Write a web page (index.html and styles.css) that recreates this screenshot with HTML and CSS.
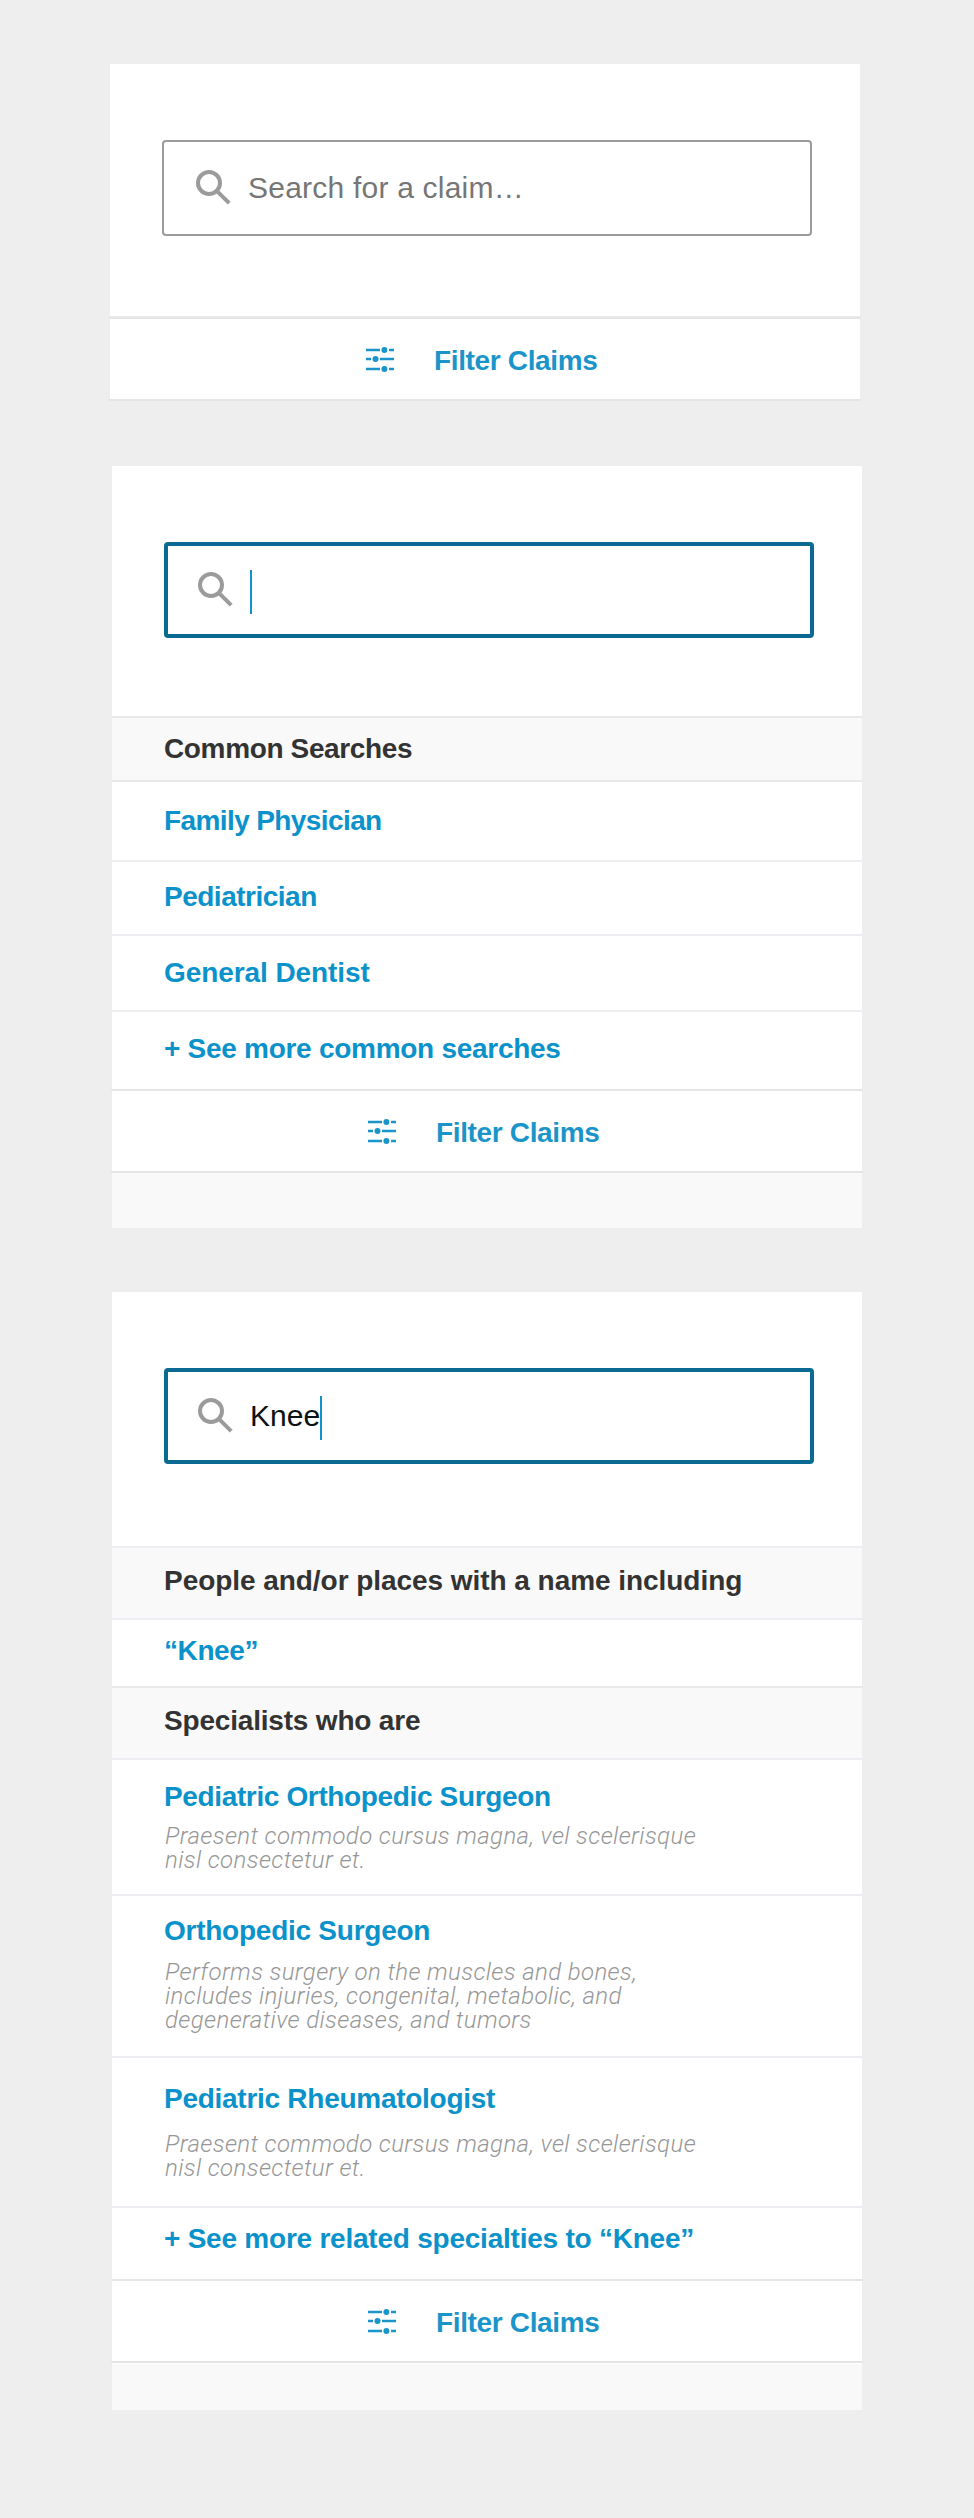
FILE: index.html
```
<!DOCTYPE html>
<html lang="en">
<head>
<meta charset="utf-8">
<title>Claim search</title>
<link rel="stylesheet" href="styles.css">
</head>
<body>
<svg class="defs" width="0" height="0">
  <symbol id="search" viewBox="0 0 36 36">
    <circle cx="13" cy="13" r="11" fill="none" stroke="#9b9b9b" stroke-width="4"/>
    <path d="M21.8 21.8 33.2 33.2" stroke="#9b9b9b" stroke-width="4"/>
  </symbol>
  <symbol id="sliders" viewBox="0 0 28 26">
    <path d="M0 3h14M23 3h5M0 12h5M14 12h14M0 22h14M23 22h5" stroke="#1b95c9" stroke-width="2.4"/>
    <g fill="#1b95c9"><circle cx="18.4" cy="3" r="3"/><circle cx="9.5" cy="12" r="3"/><circle cx="18.4" cy="22" r="3"/></g>
  </symbol>
</svg>
<main class="page">
  <section class="card card-idle">
    <div class="search">
      <div class="field"><svg class="glass"><use href="#search"/></svg><span class="placeholder">Search for a claim…</span></div>
    </div>
    <div class="line line-thick"></div>
    <div class="filter"><svg class="sliders"><use href="#sliders"/></svg><span>Filter Claims</span></div>
    <div class="line line-dark"></div>
  </section>

  <section class="card card-focus">
    <div class="search">
      <div class="field field-active"><svg class="glass"><use href="#search"/></svg><i class="caret"></i></div>
    </div>
    <div class="line line-head"></div>
    <h2 class="heading heading-common">Common Searches</h2>
    <div class="line line-head"></div>
    <a class="row row-family">Family Physician</a>
    <div class="line"></div>
    <a class="row row-pediatrician">Pediatrician</a>
    <div class="line"></div>
    <a class="row row-dentist">General Dentist</a>
    <div class="line"></div>
    <a class="row row-more">+ See more common searches</a>
    <div class="line line-dark"></div>
    <div class="filter"><svg class="sliders"><use href="#sliders"/></svg><span>Filter Claims</span></div>
    <div class="line line-dark"></div>
    <div class="foot"></div>
  </section>

  <section class="card card-results">
    <div class="search">
      <div class="field field-active"><svg class="glass"><use href="#search"/></svg><span class="value">Knee</span><i class="caret"></i></div>
    </div>
    <div class="line"></div>
    <h2 class="heading heading-people">People and/or places with a name including</h2>
    <div class="line"></div>
    <a class="row row-knee">“Knee”</a>
    <div class="line line-head"></div>
    <h2 class="heading heading-who">Specialists who are</h2>
    <div class="line"></div>
    <article class="row result-pos">
      <a class="title">Pediatric Orthopedic Surgeon</a>
      <p class="desc">Praesent commodo cursus magna, vel scelerisque<br>nisl consectetur et.</p>
    </article>
    <div class="line"></div>
    <article class="row result-os">
      <a class="title">Orthopedic Surgeon</a>
      <p class="desc">Performs surgery on the muscles and bones,<br>includes injuries, congenital, metabolic, and<br>degenerative diseases, and tumors</p>
    </article>
    <div class="line"></div>
    <article class="row result-pr">
      <a class="title">Pediatric Rheumatologist</a>
      <p class="desc">Praesent commodo cursus magna, vel scelerisque<br>nisl consectetur et.</p>
    </article>
    <div class="line"></div>
    <a class="row row-related">+ See more related specialties to “Knee”</a>
    <div class="line line-dark"></div>
    <div class="filter"><svg class="sliders"><use href="#sliders"/></svg><span>Filter Claims</span></div>
    <div class="line line-dark"></div>
    <div class="foot"></div>
  </section>
</main>
</body>
</html>
```
FILE: styles.css
```
* { box-sizing: border-box; }
body { margin: 0; background: #eee; font-family: "Liberation Sans", Arial, sans-serif; }
.defs { display: block; position: absolute; }
.page { display: flex; flex-direction: column; min-height: 2518px; padding: 64px 0 0 112px; }

.card { width: 750px; background: #fff; }
.card-idle { margin: 0 0 65px -2px; }
.card-focus { margin-bottom: 64px; }

.search { padding: 76px 48px 0 52px; height: 250px; }
.card-idle .search { height: 252px; }
.card-results .search { height: 254px; }

.field { --edge: 2px; display: flex; align-items: flex-start; width: 650px; height: 96px;
  padding: calc(30px - var(--edge)) 0 0 calc(34px - var(--edge));
  border: var(--edge) solid #9b9b9b; border-radius: 4px;
  font-size: 30px; line-height: 35px; white-space: nowrap; }
.field-active { --edge: 4px; border-color: #0a6a91; }
.glass { flex: none; width: 36px; height: 36px; margin-right: 16px; }
.placeholder { color: #767676; letter-spacing: .22px; }
.value { width: 70px; color: #0b1214; }
.caret { flex: none; width: 2px; height: 44px; margin-top: -2px; background: #1492c9; }

.line { height: 2px; margin: 0 -1px; background: #eeeef2; }
.line-head { background: #e9e9ec; }
.line-dark { background: #e5e5e5; }
.line-thick { height: 3px; background: #e5e5e5; border-top: 1px solid #ebebeb; }

.heading, .row, .filter { font-size: 28px; line-height: 33px; font-weight: 700; letter-spacing: -.25px; white-space: nowrap; }
.heading { margin: 0; padding: 16px 0 0 52px; height: 70px; background: #f9f9f9; color: #333; }
.row { display: block; padding-left: 52px; color: #0c92ca; }

.heading-common { height: 62px; padding-top: 14px; letter-spacing: -.36px; }
.heading-people { letter-spacing: -.05px; }
.heading-who { letter-spacing: -.19px; }
.row-family { height: 78px; padding-top: 22px; letter-spacing: -.6px; }
.row-pediatrician { height: 72px; padding-top: 18px; letter-spacing: -.5px; }
.row-dentist { height: 74px; padding-top: 20px; letter-spacing: -.08px; }
.row-more { height: 77px; padding-top: 20px; letter-spacing: -.28px; }
.row-knee { height: 66px; padding-top: 14px; letter-spacing: -.41px; }
.row-related { height: 71px; padding-top: 14px; letter-spacing: -.23px; }

.result-pos { height: 134px; padding-top: 20px; letter-spacing: -.36px; }
.result-os { height: 160px; padding-top: 18px; }
.result-pr { height: 148px; padding-top: 24px; letter-spacing: -.27px; }
.title { display: block; }
.desc { margin: 11px 0 0 1px; font-family: Roboto, sans-serif; font-size: 24px; line-height: 24px; font-weight: 300; font-style: italic; letter-spacing: .38px; color: #979797; }
.result-os .desc { margin-top: 13px; }
.result-pr .desc { margin-top: 17px; }

.filter { display: flex; align-items: flex-start; height: 80px; padding: 25px 0 0 256px; color: #1b95c9; letter-spacing: -.35px; }
.sliders { width: 28px; height: 26px; margin: 3px 40px 0 0; }

.foot { height: 55px; background: #f9f9f9; }
.card-results .foot { height: 47px; border-top: 1px solid #fff; }
```
